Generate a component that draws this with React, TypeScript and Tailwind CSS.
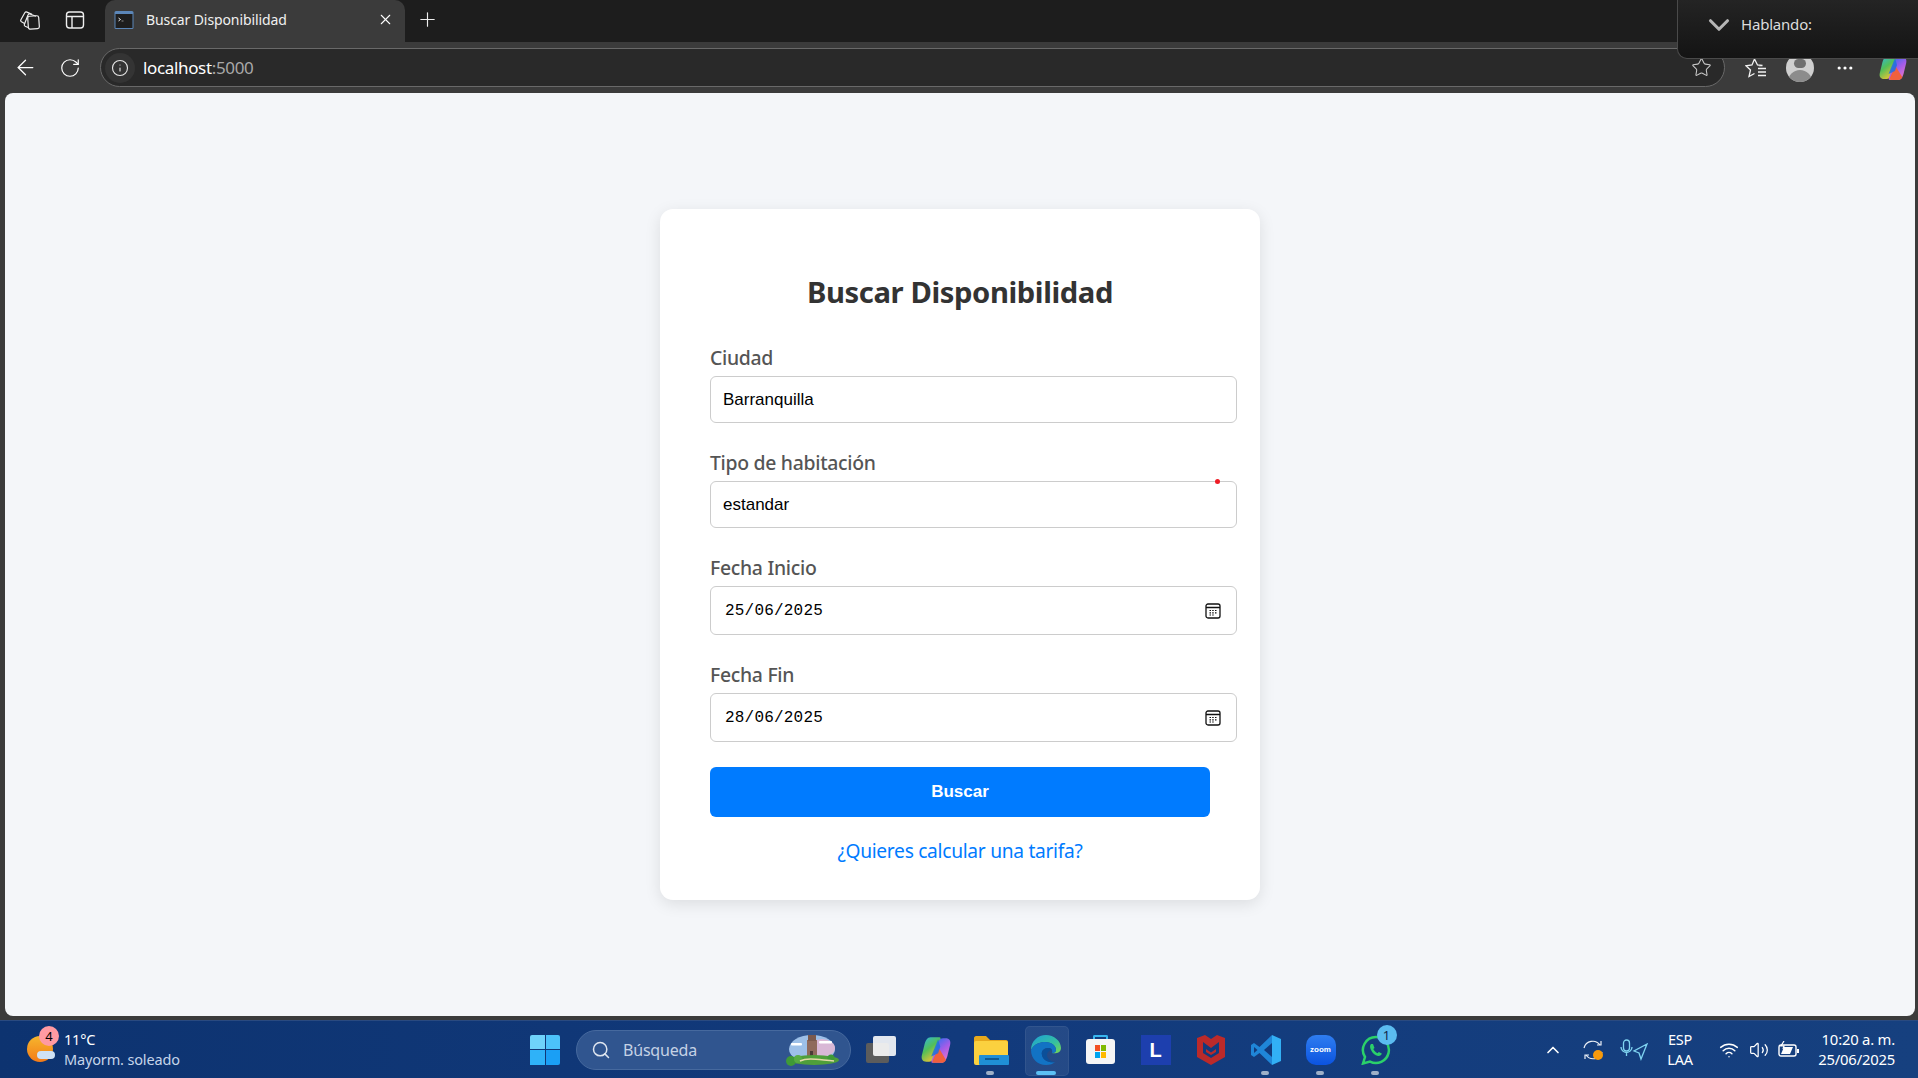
import React from 'react';
import { ArrowLeft, RotateCw, Info, Star, MoreHorizontal, X, Plus, ChevronUp, ChevronDown, Search, Wifi, Volume2 } from 'lucide-react';

const ui = "font-['Noto_Sans',sans-serif]";

const CopilotIcon = ({ size }: { size: number }) => (
  <svg width={size} height={size} viewBox="0 0 28 28">
    <defs>
      <linearGradient id="cpA" x1="0" y1="0" x2="0.6" y2="1">
        <stop offset="0" stopColor="#2fb6e8" />
        <stop offset="0.5" stopColor="#52bf58" />
        <stop offset="1" stopColor="#f5c431" />
      </linearGradient>
      <linearGradient id="cpB" x1="0.2" y1="0" x2="0.8" y2="1">
        <stop offset="0" stopColor="#2a6ff0" />
        <stop offset="0.5" stopColor="#a45ce8" />
        <stop offset="1" stopColor="#ee78c4" />
      </linearGradient>
    </defs>
    <path d="M9 2h8c1.500 0 1.600 1.200 1 2.500L11.500 22c-.8 2-2 3-4 3H5c-3.500 0-5-2.500-4.200-6l2.200-9C4 5 6 2 9 2z" fill="url(#cpA)" />
    <path d="M19 26h-8c-1.500 0-1.600-1.200-1-2.500L16.500 6c.8-2 2-3 4-3H23c3.500 0 5 2.500 4.200 6l-2.200 9C24 23 22 26 19 26z" fill="url(#cpB)" />
    <path d="M16.500 12L11 23.500c-.6 1.300-.5 2.500 1 2.500h7c1.800 0 3.400-1 4.300-2.700z" fill="#f0603c" />
    <path d="M16 4L9.500 20 16 17l2-6z" fill="#1f6fe0" opacity="0.85" />
  </svg>
);

const TabIcon = () => (
  <svg width="20" height="20" viewBox="0 0 20 20">
    <rect x="0.5" y="1" width="19" height="18" rx="1.500" fill="#5b86b8" />
    <rect x="1.500" y="4" width="17" height="14" fill="#1e1e1e" />
    <path d="M4.500 8l2 1.500-2 1.500" stroke="#fff" strokeWidth="0.9" fill="none" />
    <path d="M7.500 11h2" stroke="#aaa" strokeWidth="0.8" />
  </svg>
);

const CalendarIcon = () => (
  <svg width="16" height="16" viewBox="0 0 16 16" fill="none" stroke="#111">
    <rect x="1" y="1" width="14" height="14" rx="2" strokeWidth="1.300" />
    <path d="M1 4.500h14" strokeWidth="1.500" />
    <path d="M4.500 7.500h1.500M7.200 7.500h1.500M10 7.500h1.500M4.500 9.800h1.500M7.200 9.800h1.500M10 9.800h1.500M4.500 12h1.500M7.200 12h1.500" strokeWidth="1.200" />
  </svg>
);

function Field({ label, value }: { label: string; value: string }) {
  return (
    <div className="mb-[28px]">
      <label className={`${ui} block text-[19.400px] leading-[24px] font-medium text-[#555555] mb-[6px] tracking-[-0.3px]`}>{label}</label>
      <input
        readOnly
        value={value}
        className="w-[527px] h-[47px] px-[12px] border border-[#cccccc] rounded-[6px] bg-white text-[17px] text-black font-['Liberation_Sans',sans-serif] outline-none"
      />
    </div>
  );
}

function DateField({ label, value }: { label: string; value: string }) {
  return (
    <div className="mb-[28px]">
      <label className={`${ui} block text-[19.400px] leading-[24px] font-medium text-[#555555] mb-[6px] tracking-[-0.3px]`}>{label}</label>
      <div className="w-[527px] h-[49px] pl-[14px] pr-[15px] border border-[#cccccc] rounded-[6px] bg-white flex items-center justify-between">
        <span className="font-['Liberation_Mono',monospace] text-[16px] text-black tracking-[0.2px]">{value}</span>
        <CalendarIcon />
      </div>
    </div>
  );
}

function TabStrip() {
  return (
    <div className="h-[42px] bg-[#1d1d1d] flex items-end shrink-0">
      <div className="w-[105px] h-full flex items-center pl-[20px] gap-[25px] text-white pb-[3px]">
        <svg width="20" height="20" viewBox="0 0 20 20" fill="none" stroke="#eee" strokeWidth="1.200">
          <rect x="8" y="6" width="11" height="13" rx="2" transform="rotate(-4 13 12)" />
          <path d="M8 17.500l-2.800-1.200c-.8-.4-1.100-1.200-.8-2L8 5c.3-.9 1.100-1.300 2-1l6 2.200" />
          <path d="M4.500 13.500L1.500 11.800c-.8-.5-1-1.300-.6-2.100L4.800 2.800C5.300 2 6 1.700 6.900 2.100l5.100 2.300" />
        </svg>
        <svg width="20" height="20" viewBox="0 0 20 20" fill="none" stroke="#eee" strokeWidth="1.400">
          <rect x="1.500" y="2" width="17" height="16" rx="3" />
          <path d="M1.500 6.500h17M7 6.500V18" />
        </svg>
      </div>
      <div className="w-[300px] h-[42px] bg-[#3b3b3b] rounded-t-[10px] flex items-center pl-[9px] pr-[11px] pb-[3px] text-white">
        <TabIcon />
        <span className={`${ui} ml-[12px] text-[14px] tracking-[-0.1px] text-[#f0f0f0] flex-1`}>Buscar Disponibilidad</span>
        <X size={17} strokeWidth={1.500} />
      </div>
      <div className="h-full flex items-center ml-[11px] text-[#eee] pb-[3px]">
        <Plus size={23} strokeWidth={1.200} />
      </div>
    </div>
  );
}

function Toolbar() {
  return (
    <div className="h-[51px] bg-[#3b3b3b] flex items-center shrink-0 text-white">
      <div className="w-[50px] flex justify-center"><ArrowLeft size={25} strokeWidth={1.200} /></div>
      <div className="w-[40px] flex justify-center"><RotateCw size={22} strokeWidth={1.300} /></div>
      <div className="ml-[10px] w-[1625px] h-[39px] rounded-full border border-[#696969] bg-[#292929] flex items-center pl-[4px] pr-[12px]">
        <div className="w-[30px] h-[30px] rounded-full bg-[#343434] flex items-center justify-center text-[#e6e6e6]"><Info size={18} strokeWidth={1.500} /></div>
        <span className={`${ui} ml-[8px] text-[17px] tracking-[-0.35px] flex-1`}>
          localhost<span className="text-[#a8a8a8]">:5000</span>
        </span>
        <Star size={21} strokeWidth={1.200} className="text-[#c9c9c9]" />
      </div>
      <div className="ml-[19px] w-[24px] flex justify-center">
        <svg width="22" height="22" viewBox="0 0 22 22" fill="none" stroke="#f2f2f2" strokeWidth="1.300">
          <path d="M14 8.500h3.500l-5-.5L9.500 2 7 8l-6 .8 4.500 4.200L4 19.500l5.500-3" />
          <path d="M13 11.500h8M13 15h8M13 18.500h8" />
        </svg>
      </div>
      <div className="ml-[18px] w-[28px] h-[28px] rounded-full bg-[#cfcfcf] overflow-hidden flex flex-col items-center">
        <div className="mt-[5px] w-[12px] h-[12px] rounded-full bg-[#6f6f6f]" />
        <div className="mt-[2px] w-[24px] h-[14px] rounded-t-full bg-[#8c8c8c]" />
      </div>
      <div className="ml-[19px] w-[24px] flex justify-center"><MoreHorizontal size={20} strokeWidth={1.800} /></div>
      <div className="ml-[22px]"><CopilotIcon size={28} /></div>
    </div>
  );
}

function SearchCard() {
  return (
    <div className="w-[600px] h-[691px] mt-[116px] bg-white rounded-[13px] shadow-[0_4px_16px_rgba(0,0,0,0.1)] px-[50px] pt-[63px]">
      <h2 className={`${ui} text-center text-[29.200px] leading-[40px] font-bold text-[#333333] tracking-[-0.4px] mb-[34px]`}>Buscar Disponibilidad</h2>
      <Field label="Ciudad" value="Barranquilla" />
      <div className="relative">
        <Field label="Tipo de habitación" value="estandar" />
        <div className="absolute left-[505px] top-[28px] w-[5px] h-[5px] rounded-full bg-[#ee1c25]" />
      </div>
      <div className="mt-[1px]">
        <DateField label="Fecha Inicio" value="25/06/2025" />
      </div>
      <DateField label="Fecha Fin" value="28/06/2025" />
      <button className="w-[500px] h-[50px] -mt-[3px] bg-[#007bff] rounded-[6px] text-white text-[17px] font-bold font-['Liberation_Sans',sans-serif]">Buscar</button>
      <div className="mt-[21px] text-center">
        <a className={`${ui} text-[#007bff] text-[19.200px] leading-[26px] tracking-[-0.3px]`}>¿Quieres calcular una tarifa?</a>
      </div>
    </div>
  );
}

function Slot({ children, dot, active }: { children: React.ReactNode; dot?: boolean; active?: boolean }) {
  return (
    <div className="relative w-[55px] h-[58px] flex items-center justify-center">
      {active && <div className="absolute left-[7px] top-[5px] w-[44px] h-[50px] rounded-[5px] bg-[#ffffff14] border border-[#ffffff10]" />}
      <div className="relative flex items-center justify-center">{children}</div>
      {dot && <div className="absolute left-[23px] top-[50px] w-[8px] h-[4px] rounded-full bg-[#9fb0c8]" />}
      {active && <div className="absolute left-[18px] top-[50px] w-[20px] h-[4px] rounded-full bg-[#5cc0f5]" />}
    </div>
  );
}

function Taskbar() {
  return (
    <div className="h-[58px] shrink-0 border-t border-[#2a4a80] bg-gradient-to-r from-[#0d3370] via-[#123a7c] to-[#16407f] flex items-center text-white">
      <div className="w-[530px] h-full flex items-center pl-[27px] shrink-0">
        <div className="relative w-[30px] h-[30px]">
          <div className="absolute left-0 top-[1px] w-[26px] h-[26px] rounded-full bg-gradient-to-b from-[#f5b62d] to-[#f27a18]" />
          <div className="absolute left-[10px] top-[16px] w-[18px] h-[8px] rounded-full bg-[#cfe2f5]" />
          <div className="absolute left-[12px] top-[-9px] w-[20px] h-[20px] rounded-full bg-[#ff9aa2] text-black text-[13px] leading-[20px] text-center font-['Noto_Sans',sans-serif]">4</div>
        </div>
        <div className={`${ui} ml-[7px] leading-[20px] mb-[2px]`}>
          <div className="text-[14.500px] tracking-[-0.2px]">11°C</div>
          <div className="text-[14.500px] tracking-[-0.15px] text-[#c6d5ea]">Mayorm. soleado</div>
        </div>
      </div>
      <div className="w-[46px] flex shrink-0">
        <div className="grid grid-cols-2 gap-[1px] w-[30px] h-[30px]">
          <div className="bg-[#6fd3fb] rounded-tl-[2px]" />
          <div className="bg-[#4cc2fa] rounded-tr-[2px]" />
          <div className="bg-[#2fb2f8]" />
          <div className="bg-[#1a9ff5] rounded-br-[2px]" />
        </div>
      </div>
      <div className="w-[275px] h-[40px] shrink-0 rounded-full bg-[#30558f] border border-[#46699e] flex items-center pl-[14px] pr-[8px]">
        <Search size={20} strokeWidth={1.800} className="text-[#dfe6f0]" />
        <span className={`${ui} ml-[12px] text-[16px] tracking-[-0.2px] text-[#c5d2e5] flex-1`}>Búsqueda</span>
        <svg width="58" height="34" viewBox="0 0 58 34">
          <ellipse cx="28" cy="16" rx="23" ry="14" fill="#9dc0e8" />
          <ellipse cx="38" cy="15" rx="13" ry="9" fill="#d9b8d6" />
          <rect x="23" y="7" width="10" height="18" fill="#8f6a5c" />
          <rect x="24" y="2" width="8" height="6" fill="#7a5a4e" />
          <rect x="26" y="18" width="3" height="6" fill="#4b3a36" />
          <ellipse cx="30" cy="27" rx="25" ry="5" fill="#4f9f3a" />
          <circle cx="7" cy="28" r="5" fill="#3f9a37" />
          <circle cx="14" cy="26" r="4" fill="#58ad42" />
          <circle cx="47" cy="25" r="3.500" fill="#3f9a37" />
          <path d="M16 28c8-4 20-1 34 0" stroke="#e3d9a8" strokeWidth="1.500" fill="none" />
          <rect x="35" y="8" width="13" height="2.500" rx="1" fill="#fff" />
          <rect x="7" y="10" width="11" height="2.500" rx="1" fill="#fff" />
        </svg>
      </div>
      <div className="flex ml-[2px] shrink-0">
        <Slot>
          <div className="relative w-[30px] h-[28px]">
            <div className="absolute left-0 top-[7px] w-[23px] h-[20px] rounded-[2px] bg-[#5c5c5c]" />
            <div className="absolute left-[7px] top-0 w-[23px] h-[20px] rounded-[2px] bg-[#ffffffe0]" />
          </div>
        </Slot>
        <Slot><CopilotIcon size={30} /></Slot>
        <Slot dot>
          <svg width="36" height="30" viewBox="0 0 36 30">
            <path d="M1 3c0-1 1-2 2-2h10l4 4h16c1.500 0 2 1 2 2v3H1z" fill="#e8a91c" />
            <rect x="1" y="6" width="34" height="24" rx="2" fill="#fbd13f" />
            <rect x="6" y="20" width="30" height="10" rx="1" fill="#1f8fd6" />
            <rect x="12" y="23" width="14" height="2" fill="#0b5a95" />
          </svg>
        </Slot>
        <Slot active>
          <svg width="30" height="30" viewBox="0 0 30 30">
            <defs>
              <linearGradient id="edgeA" x1="0" y1="0" x2="1" y2="1">
                <stop offset="0" stopColor="#1d9fd8" />
                <stop offset="0.6" stopColor="#35c1a0" />
                <stop offset="1" stopColor="#7bd84f" />
              </linearGradient>
            </defs>
            <path d="M15 0C7 0 0 6 0 15c3-6 9-8 14-8 7 0 11 4 11 8 0 2-2 3-4 3-1 0 0 0 0 0 3 1 9 0 9-5C30 6 23 0 15 0z" fill="url(#edgeA)" />
            <path d="M0 15c0 9 7 15 15 15 4 0 7-1 9-3-5 1-12-1-13-7-1-4 2-7 6-7 3 0 5 2 4 5 3 0 4-1 4-3 0-4-4-8-11-8-5 0-11 2-14 8z" fill="#1273c4" />
            <path d="M11 20c1 6 8 8 13 7-4 0-8-3-8-7 0-3 3-5 5-5-1-2-3-2-4-2-4 0-7 3-6 7z" fill="#0b4f99" />
          </svg>
        </Slot>
        <Slot>
          <div className="relative w-[29px] h-[30px]">
            <div className="absolute left-[7px] top-0 w-[15px] h-[8px] border-2 border-b-0 border-[#38b6f0] rounded-t-[2px]" />
            <div className="absolute left-0 top-[4px] w-[29px] h-[25px] rounded-[3px] bg-[#f5f5f5] grid grid-cols-2 gap-[1px] px-[9px] py-[6px]">
              <div className="bg-[#f25022]" />
              <div className="bg-[#7fba00]" />
              <div className="bg-[#00a4ef]" />
              <div className="bg-[#ffb900]" />
            </div>
          </div>
        </Slot>
        <Slot>
          <div className="w-[30px] h-[30px] bg-[#1d3fae] flex items-center justify-center text-white font-bold text-[20px] font-['Liberation_Sans',sans-serif]">L</div>
        </Slot>
        <Slot>
          <svg width="28" height="30" viewBox="0 0 28 30">
            <path d="M0 3l8 -3 6 4 6-4 8 3v19l-14 8-14-8z" fill="#bb2a2a" />
            <path d="M6 7l8 6 8-6v11l-8 5-8-5z" fill="#123a7c" />
            <path d="M9 14l5 3.500 5-3.500v3l-5 3-5-3z" fill="#bb2a2a" />
          </svg>
        </Slot>
        <Slot dot>
          <svg width="30" height="30" viewBox="0 0 30 30">
            <path d="M21 0L8.500 12 3 8 0 10v10l3 2 5.500-4L21 30z" fill="#1f86d8" />
            <path d="M21 0l9 4v22l-9 4z" fill="#32b0f5" />
            <path d="M21 8l-8 7 8 7z" fill="#123a7c" />
            <path d="M3 12l3.500 3L3 18z" fill="#123a7c" />
          </svg>
        </Slot>
        <Slot dot>
          <div className="w-[30px] h-[30px] rounded-[10px] bg-gradient-to-b from-[#2f7df0] to-[#0b53e0] flex items-center justify-center text-[8px] text-white font-['Liberation_Sans',sans-serif] font-bold">zoom</div>
        </Slot>
        <Slot dot>
          <div className="relative w-[30px] h-[30px]">
            <svg width="30" height="30" viewBox="0 0 30 30">
              <path d="M15 2a13 13 0 0 0-11 20L2 28.500l7-1.900A13 13 0 1 0 15 2z" fill="none" stroke="#2bd06a" strokeWidth="2.500" />
              <path d="M10 9c-1 1-1.500 3 0 6s4 5.500 7 6c2 .3 3.500-1 3.800-2.500l-3-1.500-1.300 1.300c-1.500-.6-3.500-2.500-4.200-4.200l1.200-1.200L12 9z" fill="#2bd06a" />
            </svg>
            <div className="absolute left-[16px] top-[-10px] w-[20px] h-[20px] rounded-full bg-[#5bbcf0] text-[#10264a] text-[13px] leading-[20px] text-center font-['Noto_Sans',sans-serif]">1</div>
          </div>
        </Slot>
      </div>
      <div className="flex-1" />
      <div className="flex items-center shrink-0 pr-[23px]">
        <ChevronUp size={20} strokeWidth={2} className="mr-[19px]" />
        <div className="relative mr-[16px]">
          <svg width="22" height="22" viewBox="0 0 22 22" fill="none" stroke="#eef2f8" strokeWidth="1.200">
            <path d="M2 9a9 9 0 0 1 16-3M19 2v4h-4M20 13a9 9 0 0 1-16 3M3 20v-4h4" />
          </svg>
          <div className="absolute left-[11px] top-[11px] w-[10px] h-[10px] rounded-full bg-[#f79a0c]" />
        </div>
        <svg width="28" height="22" viewBox="0 0 28 22" fill="none" stroke="#7fd3f0" strokeWidth="1.300" className="mr-[17px]">
          <rect x="3.500" y="1" width="6" height="11" rx="3" />
          <path d="M1 8a5.500 5.500 0 0 0 11 0M6.500 14v3M27 5L14 12l5 2 2 6z" />
        </svg>
        <div className={`${ui} w-[30px] text-center text-[14.500px] leading-[20px] tracking-[-0.2px] mb-[2px]`}>
          <div>ESP</div>
          <div>LAA</div>
        </div>
        <Wifi size={20} strokeWidth={1.800} className="ml-[24px]" />
        <Volume2 size={20} strokeWidth={1.500} className="ml-[10px]" />
        <svg width="22" height="18" viewBox="0 0 22 18" fill="none" stroke="#fff" strokeWidth="1.400" className="ml-[9px]">
          <rect x="1" y="4" width="17" height="11" rx="2" />
          <path d="M20 8v4" strokeWidth="2" />
          <path d="M3 13l3-7h9l-3 7z" fill="#fff" stroke="none" />
          <path d="M6 0L3 5h3L5 8" strokeWidth="1.200" />
        </svg>
        <div className={`${ui} ml-[7px] w-[88px] text-right text-[14.800px] leading-[20px] tracking-[-0.2px] mb-[2px]`}>
          <div>10:20 a. m.</div>
          <div>25/06/2025</div>
        </div>
      </div>
    </div>
  );
}

export default function App() {
  return (
    <div className="relative w-[1918px] h-[1078px] overflow-hidden flex flex-col bg-[#3b3b3b]">
      <TabStrip />
      <Toolbar />
      <div className="flex-1 ml-[5px] mr-[3px] mb-[4px] bg-[#f4f6f9] rounded-[8px] flex justify-center min-h-0">
        <SearchCard />
      </div>
      <Taskbar />
      <div className="absolute right-0 top-0 w-[241px] h-[59px] rounded-bl-[10px] border-l border-b border-[#4a4a4a] bg-gradient-to-b from-[#242424] to-[#141414] flex items-center pl-[24px] pb-[9px] text-[#dcdcdc]">
        <ChevronDown size={34} strokeWidth={2.200} className="text-[#b5b5b5]" />
        <span className={`${ui} ml-[5px] text-[15px] tracking-[-0.2px]`}>Hablando:</span>
      </div>
    </div>
  );
}
